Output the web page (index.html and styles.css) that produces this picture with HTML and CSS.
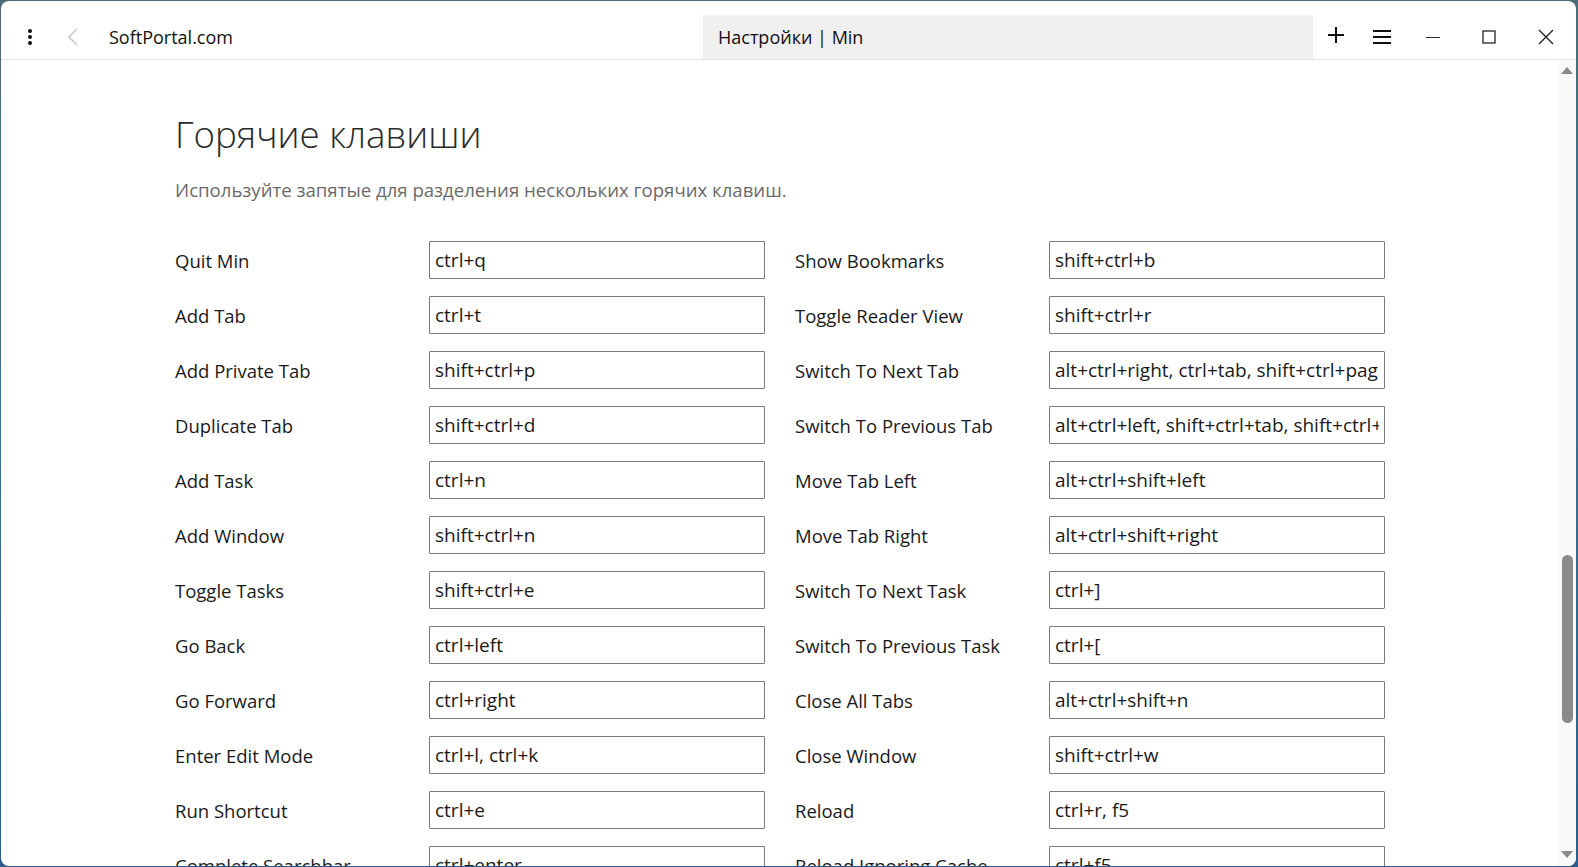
FILE: index.html
```html
<!DOCTYPE html>
<html lang="ru">
<head>
    <meta charset="UTF-8">
    <title>Настройки | Min</title>
    <link rel="stylesheet" href="styles.css">
</head>
<body>
    <div class="window">
        <!-- Панель вкладок -->
        <div class="titlebar">
            <div class="menu-btn">
                <svg width="6" height="18" viewBox="0 0 6 18"><circle cx="3" cy="3" r="2" fill="#111"/><circle cx="3" cy="9" r="2" fill="#111"/><circle cx="3" cy="15" r="2" fill="#111"/></svg>
            </div>
            <div class="back-btn">
                <svg width="12" height="20" viewBox="0 0 12 20"><path d="M10 2 L2 10 L10 18" fill="none" stroke="#c8c8c8" stroke-width="1.6"/></svg>
            </div>
            <div class="tab tab-site">SoftPortal.com</div>
            <div class="tab tab-active">Настройки | Min</div>
            <div class="controls">
                <span class="ctrl ctrl-add">
                    <svg width="18" height="18" viewBox="0 0 18 18"><path d="M9 1 V17 M1 9 H17" stroke="#111" stroke-width="2"/></svg>
                </span>
                <span class="ctrl ctrl-menu">
                    <svg width="18" height="16" viewBox="0 0 18 16"><path d="M0 2 H18 M0 8 H18 M0 14 H18" stroke="#111" stroke-width="2.2"/></svg>
                </span>
                <span class="ctrl ctrl-min">
                    <svg width="14" height="14" viewBox="0 0 14 14"><path d="M0 7.5 H14" stroke="#333" stroke-width="1"/></svg>
                </span>
                <span class="ctrl ctrl-max">
                    <svg width="14" height="14" viewBox="0 0 14 14"><rect x="1" y="1" width="12" height="12" fill="none" stroke="#333" stroke-width="1.4"/></svg>
                </span>
                <span class="ctrl ctrl-close">
                    <svg width="16" height="16" viewBox="0 0 16 16"><path d="M1 1 L15 15 M15 1 L1 15" stroke="#222" stroke-width="1.4"/></svg>
                </span>
            </div>
        </div>

        <div class="body">
            <div class="page">
                <h1>Горячие клавиши</h1>
                <p class="hint">Используйте запятые для разделения нескольких горячих клавиш.</p>

                <div class="keymap">
                    <div class="binding"><label>Quit Min</label><input value="ctrl+q"></div>
                    <div class="binding"><label>Show Bookmarks</label><input value="shift+ctrl+b"></div>

                    <div class="binding"><label>Add Tab</label><input value="ctrl+t"></div>
                    <div class="binding"><label>Toggle Reader View</label><input value="shift+ctrl+r"></div>

                    <div class="binding"><label>Add Private Tab</label><input value="shift+ctrl+p"></div>
                    <div class="binding"><label>Switch To Next Tab</label><input value="alt+ctrl+right, ctrl+tab, shift+ctrl+pagedown"></div>

                    <div class="binding"><label>Duplicate Tab</label><input value="shift+ctrl+d"></div>
                    <div class="binding"><label>Switch To Previous Tab</label><input value="alt+ctrl+left, shift+ctrl+tab, shift+ctrl+pageup"></div>

                    <div class="binding"><label>Add Task</label><input value="ctrl+n"></div>
                    <div class="binding"><label>Move Tab Left</label><input value="alt+ctrl+shift+left"></div>

                    <div class="binding"><label>Add Window</label><input value="shift+ctrl+n"></div>
                    <div class="binding"><label>Move Tab Right</label><input value="alt+ctrl+shift+right"></div>

                    <div class="binding"><label>Toggle Tasks</label><input value="shift+ctrl+e"></div>
                    <div class="binding"><label>Switch To Next Task</label><input value="ctrl+]"></div>

                    <div class="binding"><label>Go Back</label><input value="ctrl+left"></div>
                    <div class="binding"><label>Switch To Previous Task</label><input value="ctrl+["></div>

                    <div class="binding"><label>Go Forward</label><input value="ctrl+right"></div>
                    <div class="binding"><label>Close All Tabs</label><input value="alt+ctrl+shift+n"></div>

                    <div class="binding"><label>Enter Edit Mode</label><input value="ctrl+l, ctrl+k"></div>
                    <div class="binding"><label>Close Window</label><input value="shift+ctrl+w"></div>

                    <div class="binding"><label>Run Shortcut</label><input value="ctrl+e"></div>
                    <div class="binding"><label>Reload</label><input value="ctrl+r, f5"></div>

                    <div class="binding"><label>Complete Searchbar</label><input value="ctrl+enter"></div>
                    <div class="binding"><label>Reload Ignoring Cache</label><input value="ctrl+f5"></div>
                </div>
            </div>

            <!-- Полоса прокрутки -->
            <div class="scrollbar">
                <span class="arrow arrow-up"></span>
                <div class="track">
                    <div class="thumb"></div>
                </div>
                <span class="arrow arrow-down"></span>
            </div>
        </div>
    </div>
</body>
</html>
```

FILE: styles.css
```css
:root {
    --text: #1a1a1a;
    --muted: #6a6a6a;
    --line: #e2e2e2;
    --tab-bg: #efefef;
    --field-border: #7a7a7a;
}

* {
    margin: 0;
    padding: 0;
    box-sizing: border-box;
}

html, body {
    height: 100%;
}

body {
    font-family: 'Open Sans', 'Noto Sans', sans-serif;
    background: linear-gradient(180deg, #4b6a7a 0%, #3f6f86 50%, #2d5d8a 100%);
    color: var(--text);
    padding: 1px 2px 1px 1px;
    overflow: hidden;
}

.window {
    height: 100%;
    background: #fff;
    border-radius: 8px;
    display: flex;
    flex-direction: column;
    overflow: hidden;
}

.titlebar {
    height: 59px;
    display: flex;
    align-items: flex-end;
    border-bottom: 1px solid var(--line);
    flex-shrink: 0;
}

.titlebar > * {
    flex-shrink: 0;
}

.menu-btn,
.back-btn {
    height: 44px;
    display: flex;
    align-items: center;
    justify-content: center;
}

.menu-btn {
    width: 26px;
    margin-left: 16px;
}

.back-btn {
    width: 24px;
    margin-left: 18px;
}

.tab {
    height: 44px;
    display: flex;
    align-items: center;
    font-size: 18px;
    color: #111;
}

.tab-site {
    width: 618px;
    padding-left: 24px;
}

.tab-active {
    width: 610px;
    padding-left: 15px;
    background: var(--tab-bg);
}

.controls {
    flex: 1;
    height: 44px;
    display: flex;
    align-items: center;
}

.ctrl {
    display: flex;
    justify-content: center;
    align-items: center;
    flex-shrink: 0;
}

.ctrl-add { width: 46px; margin-top: -4px; }
.ctrl-menu { width: 46px; }
.ctrl-min { width: 56px; }
.ctrl-max { width: 56px; }
.ctrl-close { width: 58px; }

.body {
    flex: 1;
    display: flex;
    min-height: 0;
}

.page {
    flex: 1;
    overflow: hidden;
    padding: 50px 0 0 174px;
}

h1 {
    font-weight: 300;
    font-size: 36.7px;
    color: #2a2a2a;
    line-height: 48px;
}

.hint {
    margin-top: 19px;
    font-size: 18.6px;
    color: var(--muted);
    line-height: 26px;
}

.keymap {
    margin-top: 38px;
    display: grid;
    grid-template-columns: 590px 590px;
    column-gap: 30px;
    grid-auto-rows: 38px;
    row-gap: 17px;
}

.binding {
    display: grid;
    grid-template-columns: 254px 336px;
    align-items: center;
}

.binding label {
    font-size: 18.5px;
    color: var(--text);
    white-space: nowrap;
}

.binding input {
    width: 336px;
    height: 38px;
    border: 1px solid var(--field-border);
    border-radius: 1px;
    padding: 0 5px;
    font-family: inherit;
    font-size: 19px;
    color: var(--text);
    background: #fff;
    outline: none;
}

.scrollbar {
    width: 18px;
    background: #f9f9f9;
    display: flex;
    flex-direction: column;
    align-items: center;
    flex-shrink: 0;
}

.arrow {
    width: 0;
    height: 0;
    border-left: 6px solid transparent;
    border-right: 6px solid transparent;
}

.arrow-up {
    margin-top: 7px;
    border-bottom: 7px solid #8a8a8a;
}

.arrow-down {
    margin-bottom: 8px;
    border-top: 7px solid #8a8a8a;
}

.track {
    flex: 1;
    width: 100%;
    display: flex;
    justify-content: center;
    padding-top: 481px;
}

.thumb {
    width: 11px;
    height: 168px;
    background: #8b8b8b;
    border-radius: 6px;
}
```
